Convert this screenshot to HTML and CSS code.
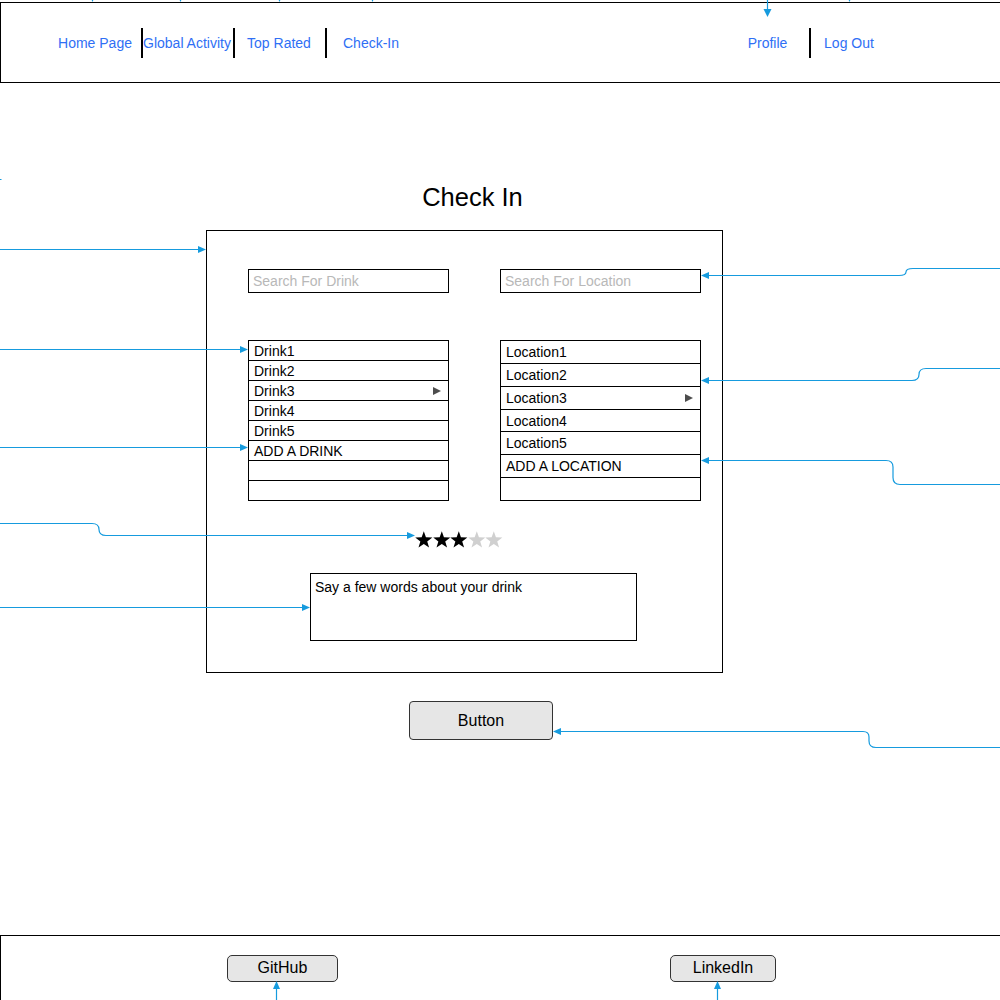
FILE: index.html
```html
<!DOCTYPE html>
<html>
<head>
<meta charset="utf-8">
<title>Check In</title>
<link rel="stylesheet" href="styles.css">
</head>
<body>
<header class="nav">
  <div class="nav-group">
    <a class="nav-cell">Home Page</a>
    <a class="nav-cell sep">Global Activity</a>
    <a class="nav-cell sep">Top Rated</a>
    <a class="nav-cell sep">Check-In</a>
  </div>
  <div class="nav-group right">
    <a class="nav-cell small">Profile</a>
    <a class="nav-cell small last sep">Log Out</a>
  </div>
</header>

<h1 class="title">Check In</h1>

<section class="panel">
  <div class="columns">
    <div class="col">
      <input class="search" placeholder="Search For Drink">
      <ul class="list">
        <li>Drink1</li>
        <li>Drink2</li>
        <li class="has-sub">Drink3<span class="tri"></span></li>
        <li>Drink4</li>
        <li>Drink5</li>
        <li>ADD A DRINK</li>
        <li></li>
        <li></li>
      </ul>
    </div>
    <div class="col">
      <input class="search" placeholder="Search For Location">
      <ul class="list">
        <li>Location1</li>
        <li>Location2</li>
        <li class="has-sub">Location3<span class="tri"></span></li>
        <li>Location4</li>
        <li>Location5</li>
        <li>ADD A LOCATION</li>
        <li></li>
      </ul>
    </div>
  </div>
  <div class="stars">
    <svg class="star on" viewBox="0 0 18 17.4"><polygon points="9,0.3 11.18,6.51 17.75,6.66 12.52,10.64 14.41,16.94 9,13.2 3.59,16.94 5.48,10.64 0.25,6.66 6.82,6.51"/></svg>
    <svg class="star on" viewBox="0 0 18 17.4"><polygon points="9,0.3 11.18,6.51 17.75,6.66 12.52,10.64 14.41,16.94 9,13.2 3.59,16.94 5.48,10.64 0.25,6.66 6.82,6.51"/></svg>
    <svg class="star on" viewBox="0 0 18 17.4"><polygon points="9,0.3 11.18,6.51 17.75,6.66 12.52,10.64 14.41,16.94 9,13.2 3.59,16.94 5.48,10.64 0.25,6.66 6.82,6.51"/></svg>
    <svg class="star off" viewBox="0 0 18 17.4"><polygon points="9,0.3 11.18,6.51 17.75,6.66 12.52,10.64 14.41,16.94 9,13.2 3.59,16.94 5.48,10.64 0.25,6.66 6.82,6.51"/></svg>
    <svg class="star off" viewBox="0 0 18 17.4"><polygon points="9,0.3 11.18,6.51 17.75,6.66 12.52,10.64 14.41,16.94 9,13.2 3.59,16.94 5.48,10.64 0.25,6.66 6.82,6.51"/></svg>
  </div>
  <div class="comment">Say a few words about your drink</div>
</section>

<div class="btn main-btn">Button</div>

<footer class="footer">
  <div class="btn small-btn github">GitHub</div>
  <div class="btn small-btn linkedin">LinkedIn</div>
</footer>

<svg class="connectors" width="1000" height="1000" viewBox="0 0 1000 1000">
  <g fill="none" stroke="#169bde" stroke-width="1.2">
    <path d="M767.5,0 V10"/>
    <path d="M0,179.5 H1.5"/>
    <path d="M0,249.5 H199"/>
    <path d="M0,349.5 H241"/>
    <path d="M0,447.5 H241"/>
    <path d="M0,523.5 H92 Q99,523.5 99,529.5 Q99,535.5 106,535.5 H408"/>
    <path d="M0,607.5 H303"/>
    <path d="M1000,268.5 H913 Q906,268.5 906,272 Q906,275.5 899,275.5 H708"/>
    <path d="M1000,368.5 H926 Q919,368.5 919,374.5 Q919,380.5 912,380.5 H708"/>
    <path d="M708,460.5 H886 Q893,460.5 893,467 V477.5 Q893,484.5 900,484.5 H1000"/>
    <path d="M560,731.5 H863 Q869,731.5 869,737 V741 Q869,747.5 876,747.5 H1000"/>
    <path d="M276.5,1000 V988"/>
    <path d="M717.5,1000 V988"/>
  </g>
  <g fill="#169bde">
    <polygon points="92.5,2 89,-6 96,-6"/>
    <polygon points="180.5,2 177,-6 184,-6"/>
    <polygon points="279.5,2 276,-6 283,-6"/>
    <polygon points="372.5,2 369,-6 376,-6"/>
    <polygon points="849.5,2 846,-6 853,-6"/>
    <polygon points="767.5,17 763.5,9 771.5,9"/>
    <polygon points="206,249.5 198,246 198,253"/>
    <polygon points="248,349.5 240,346 240,353"/>
    <polygon points="248,447.5 240,444 240,451"/>
    <polygon points="415,535.5 407,532 407,539"/>
    <polygon points="310,607.5 302,604 302,611"/>
    <polygon points="701,275.5 709,272 709,279"/>
    <polygon points="701,380.5 709,377 709,384"/>
    <polygon points="701,460.5 709,457 709,464"/>
    <polygon points="553,731.5 561,728 561,735"/>
    <polygon points="276.5,981 273,989 280,989"/>
    <polygon points="717.5,981 714,989 721,989"/>
  </g>
</svg>
</body>
</html>
```

FILE: styles.css
```css
html, body {
  margin: 0;
  padding: 0;
}

body {
  width: 1000px;
  height: 1000px;
  overflow: hidden;
  position: relative;
  background: #ffffff;
  font-family: "Liberation Sans", Arial, sans-serif;
  color: #000000;
}

.nav {
  box-sizing: border-box;
  margin-top: 2px;
  width: 1010px;
  height: 81px;
  border: 1px solid #000000;
  padding-top: 25px;
  padding-left: 48px;
  display: flex;
  align-items: flex-start;
}

.nav-group {
  display: flex;
}

.nav-group.right {
  margin-left: 309px;
}

.nav-cell {
  box-sizing: border-box;
  width: 92px;
  height: 30px;
  line-height: 30px;
  text-align: center;
  font-size: 14px;
  color: #2f6ff5;
  white-space: nowrap;
}

.nav-cell.small {
  width: 83px;
}

.nav-cell.small.last {
  width: 80px;
}

.nav-cell.sep {
  border-left: 2px solid #000000;
  padding-right: 2px;
}

.title {
  margin: 99px 0 0 206px;
  width: 517px;
  box-sizing: border-box;
  padding-left: 16px;
  height: 30px;
  line-height: 30px;
  text-align: center;
  font-size: 25.5px;
  font-weight: normal;
}

.panel {
  box-sizing: border-box;
  margin: 18px 0 0 206px;
  width: 517px;
  height: 443px;
  border: 1px solid #000000;
  padding-top: 38px;
}

.columns {
  display: flex;
  gap: 51px;
  padding-left: 41px;
}

.col {
  width: 201px;
  display: flex;
  flex-direction: column;
}

.search {
  box-sizing: border-box;
  width: 201px;
  height: 24px;
  margin: 0;
  border: 1px solid #000000;
  border-radius: 0;
  padding: 0 4px;
  font-family: "Liberation Sans", Arial, sans-serif;
  font-size: 14px;
  color: #000000;
  outline: none;
}

.search::placeholder {
  color: #b8b8b8;
}

.list {
  box-sizing: border-box;
  list-style: none;
  margin: 47px 0 0 0;
  padding: 0;
  height: 161px;
  border: 1px solid #000000;
  display: flex;
  flex-direction: column;
}

.list li {
  flex: 1;
  display: flex;
  align-items: center;
  padding-left: 5px;
  padding-right: 7px;
  font-size: 14px;
  line-height: 16px;
  white-space: nowrap;
}

.list li + li {
  border-top: 1px solid #000000;
}

.tri {
  margin-left: auto;
  width: 0;
  height: 0;
  border-left: 8px solid #4d4d4d;
  border-top: 4.5px solid transparent;
  border-bottom: 4.5px solid transparent;
}

.stars {
  display: flex;
  margin: 30px 0 0 208px;
  height: 18px;
}

.star {
  width: 17.6px;
  height: 17px;
  display: block;
}

.star.on {
  fill: #000000;
}

.star.off {
  fill: #d0d0d0;
}

.comment {
  box-sizing: border-box;
  margin: 24px 0 0 103px;
  width: 327px;
  height: 68px;
  border: 1px solid #000000;
  padding: 5px 4px;
  font-size: 14px;
  line-height: 16px;
}

.btn {
  box-sizing: border-box;
  background: #e6e6e6;
  border: 1px solid #333333;
  border-radius: 4px;
  display: flex;
  align-items: center;
  justify-content: center;
  font-size: 16px;
  color: #000000;
}

.main-btn {
  margin: 28px 0 0 409px;
  width: 144px;
  height: 39px;
}

.footer {
  box-sizing: border-box;
  margin-top: 195px;
  width: 1010px;
  height: 100px;
  border: 1px solid #000000;
  padding: 19px 0 0 226px;
  display: flex;
  align-items: flex-start;
}

.small-btn {
  height: 27px;
  border-radius: 5px;
  padding-bottom: 1px;
}

.github {
  width: 111px;
}

.linkedin {
  width: 106px;
  margin-left: 332px;
}

.connectors {
  position: absolute;
  left: 0;
  top: 0;
  pointer-events: none;
}
```
